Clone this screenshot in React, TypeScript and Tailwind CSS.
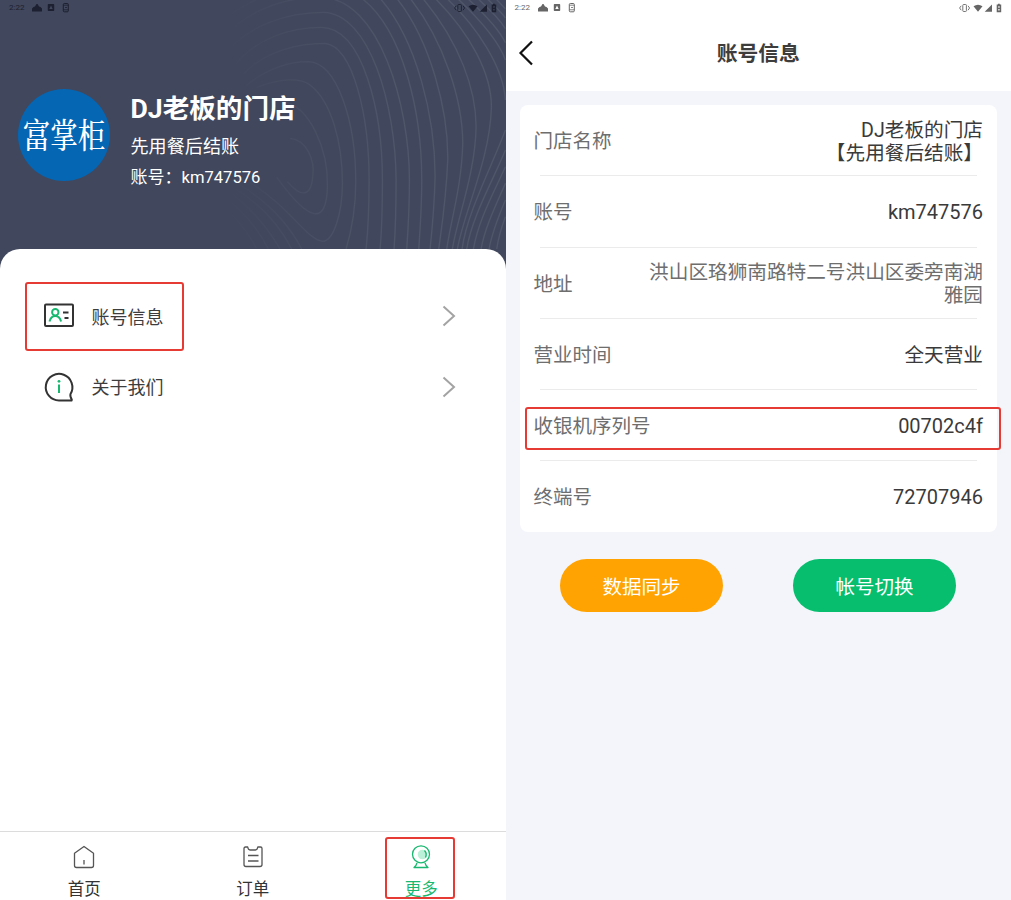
import { ReactNode } from 'react';

const FONT = "font-['Roboto','Noto_Sans_CJK_SC',sans-serif]";

// Contour lines of the profile header, in a 1516x747 space
const CONTOURS = [
  'M870 415C920 420 945 480 938 530C932 595 900 590 862 545',
  'M850 305C930 320 985 450 982 560C979 675 930 670 830 532',
  'M770 262C840 235 900 232 930 255C995 305 1027 430 1027 550C1027 640 1000 724 968 724C920 720 870 620 750 548',
  'M740 256C800 205 870 185 925 185C1010 188 1067 360 1067 545C1067 620 1055 690 1038 747',
  'M730 222C800 150 900 130 975 130C1060 140 1107 350 1107 540C1107 620 1104 690 1098 747',
  'M700 200C770 110 880 82 965 82C1090 84 1147 340 1147 540C1147 620 1145 690 1140 747',
  'M660 180C740 70 870 37 970 37C1110 40 1187 320 1188 540C1188 620 1186 690 1182 747',
  'M630 160C700 55 820 -8 960 -8C1140 -8 1228 320 1228 540C1228 620 1224 690 1220 747',
  'M600 140C660 50 750 0 820 -20M1085 -5C1210 90 1265 340 1265 540C1265 620 1260 690 1256 747',
  'M570 120C620 50 680 10 740 -20M1140 -5C1250 120 1305 350 1305 530C1303 620 1296 690 1290 747',
  'M1190 -5C1290 120 1345 330 1343 480C1338 600 1325 680 1316 747',
  'M1230 -5C1330 120 1388 300 1388 430C1385 560 1350 670 1340 747',
  'M1268 -5C1380 130 1428 270 1428 380C1426 520 1370 660 1357 747',
  'M1305 -5C1410 100 1474 220 1474 320C1470 480 1390 640 1372 747',
  'M1340 -5C1430 80 1510 200 1516 300M1516 390C1475 500 1400 640 1386 747',
  'M1372 -5C1430 50 1495 120 1516 180M1516 450C1480 540 1415 650 1400 747',
  'M1402 -5C1440 30 1495 85 1516 128M1516 500C1480 580 1435 660 1420 747',
  'M1432 -5C1460 20 1500 60 1516 86M1516 550C1490 610 1455 680 1443 747',
  'M1460 -5C1480 15 1505 38 1516 54M1516 600C1495 650 1475 700 1467 747',
  'M1486 -5L1516 26M1516 650C1505 680 1494 716 1490 747',
  'M720 555C810 610 870 680 905 747',
  'M695 560C780 610 840 680 875 747',
  'M670 565C750 615 800 680 840 747',
  'M650 575C720 620 770 680 805 747',
  'M630 590C690 630 740 690 770 747',
];

function StatusBar({ className }: { className: string }) {
  return (
    <div className={`flex h-[15px] items-center pl-[9px] pr-[9px] text-[8px] leading-none ${className}`}>
      <span className="w-[23px]">2:22</span>
      <svg width="40" height="11" viewBox="0 0 40 11" fill="currentColor">
        <path d="M0 6.500 1.500 5 3 4.500 4.500 2h1L7 4.500 8.500 5 10 6.500v3H0z" />
        <path fillRule="evenodd" d="M16.500 2h5a.7.7 0 0 1 .7.7v5.600a.7.7 0 0 1-.7.7h-5a.7.7 0 0 1-.7-.7V2.700a.7.7 0 0 1 .7-.7zM19 3.500 17.300 7h3.400z" />
        <rect x="31.300" y="1.500" width="5" height="8.300" rx="1" fill="none" stroke="currentColor" />
        <path d="M31.300 3.200h5M31.300 7.800h5M33 5.500h2" fill="none" stroke="currentColor" strokeWidth=".8" />
      </svg>
      <svg className="ml-auto" width="43" height="10" viewBox="0 0 43 10" fill="currentColor">
        <rect x="3.800" y="1.500" width="3.600" height="7" rx=".8" fill="none" stroke="currentColor" strokeWidth=".9" />
        <path d="M2.200 2.800.600 5l1.600 2.200M9 2.800 10.600 5 9 7.200" fill="none" stroke="currentColor" strokeWidth=".9" />
        <path d="M14.500 3.200Q19 .2 23.500 3.200L19 8.800zM33 1.500v7.300h-7.300z" />
        <path fillRule="evenodd" d="M39 .8h1.800v.8h1.400v7.600h-4.500V1.600H39zM39.300 3.300h1.300v1.500h-1.300zM39.300 6h1.300v1.500h-1.300z" />
      </svg>
    </div>
  );
}

function MenuItem({ icon, label }: { icon: ReactNode; label: string }) {
  return (
    <div className="flex h-[70.500px] items-center pl-[43px] pr-[48.500px]">
      <span className="w-[48.500px]">{icon}</span>
      <span className="pt-[2px] text-[18px] text-[#3d3d3d]">{label}</span>
      <svg className="ml-auto" width="16" height="22" viewBox="0 0 16 22" fill="none" stroke="#a3a3a3" strokeWidth="2">
        <path d="M2.500 1.500 13 11 2.500 20.500" />
      </svg>
    </div>
  );
}

function Tab({ icon, label, active }: { icon: ReactNode; label: string; active?: boolean }) {
  return (
    <div className={`flex flex-1 flex-col items-center pt-[12px] ${active ? 'text-[#19b870]' : 'text-[#333]'}`}>
      <div className="h-[26px] w-[26px] shrink-0">{icon}</div>
      <span className="mt-[8px] text-[16.500px] leading-[24px]">{label}</span>
    </div>
  );
}

function ProfileScreen() {
  return (
    <section className="relative flex w-[505.500px] shrink-0 flex-col bg-white">
      <div className="relative h-[269px] shrink-0 bg-[#41475c]">
        <svg className="absolute inset-0" width="505.500" height="269" viewBox="0 0 1516 807" fill="none">
          <defs>
            <linearGradient id="fade" gradientUnits="userSpaceOnUse" x1="680" y1="0" x2="1200" y2="0">
              <stop offset="0" stopColor="#7b8496" stopOpacity="0" />
              <stop offset="1" stopColor="#7b8496" stopOpacity=".25" />
            </linearGradient>
          </defs>
          {CONTOURS.map(d => (
            <path key={d} d={d} stroke="url(#fade)" strokeWidth="4" />
          ))}
        </svg>
        <div className="relative">
          <StatusBar className="text-[#1c2030]" />
          <div className="flex pl-[18px] pt-[75px]">
            <div className="-mt-px flex size-[92px] items-center justify-center rounded-full bg-[#0566b4]">
              <span className="-mt-[3px] scale-y-125 whitespace-nowrap font-['Noto_Serif_CJK_SC','Noto_Sans_CJK_SC',serif] text-[27.500px] font-medium leading-none text-white">富掌柜</span>
            </div>
            <div className="ml-[20.500px] text-white">
              <h1 className="text-[26.600px] font-bold leading-[38px]">DJ老板的门店</h1>
              <p className="mt-[6px] text-[18.100px] leading-[26px]">先用餐后结账</p>
              <p className="mt-[4px] text-[17px] leading-[26px]">
                账号：<span className="text-[16.600px]">km747576</span>
              </p>
            </div>
          </div>
        </div>
      </div>

      <div className="relative -mt-5 flex-1 rounded-t-[20px] bg-white pt-[32px]">
        <MenuItem
          label="账号信息"
          icon={
            <svg width="32" height="26" viewBox="0 0 32 26" fill="none" strokeWidth="2">
              <rect x="2" y="1.500" width="28" height="21.500" rx="1" stroke="#333" />
              <circle cx="12.300" cy="9.300" r="3.200" stroke="#19b870" />
              <path d="M6.500 18.500c1-3.800 3-5.500 5.800-5.500s4.800 1.700 5.800 5.500" stroke="#19b870" />
              <path d="M20 9.500h5.500M21.500 15H25.500" stroke="#333" />
            </svg>
          }
        />
        <MenuItem
          label="关于我们"
          icon={
            <svg width="32" height="32" viewBox="0 0 32 32" fill="none" strokeWidth="2" strokeLinejoin="round">
              <path d="M16 29.500a13.300 13.300 0 1 1 11.500-6.500c-.6 1.500-.2 2.800 1.300 5.800l-.3.700z" stroke="#333" />
              <path d="M16 13.500V22" stroke="#19b870" />
              <circle cx="16" cy="10.300" r="1.400" fill="#19b870" />
            </svg>
          }
        />
      </div>

      <nav className="flex h-[69px] shrink-0 border-t border-[#dcdcdc]">
        <Tab
          label="首页"
          icon={
            <svg width="26" height="26" viewBox="0 0 26 26" fill="none" stroke="#555" strokeWidth="1.300" strokeLinejoin="round">
              <path d="M3.500 9.300 13 2.500l9.500 6.800v12.200q0 2-2 2h-15q-2 0-2-2zM13 16v4.500" />
            </svg>
          }
        />
        <Tab
          label="订单"
          icon={
            <svg width="26" height="26" viewBox="0 0 26 26" fill="none" stroke="#555" strokeWidth="1.300" strokeLinejoin="round">
              <path d="M5.500 3h2.200q.5 3 2.300 3h5.500q1.800 0 2.300-3H20.500q1.500 0 1.500 1.500v16q0 2-2 2H6q-2 0-2-2v-16Q4 3 5.500 3zM8 11.500h10.500M8 17h10.500" />
            </svg>
          }
        />
        <Tab
          active
          label="更多"
          icon={
            <svg width="26" height="26" viewBox="0 0 26 26" fill="none" stroke="currentColor" strokeWidth="1.300" strokeLinejoin="round">
              <circle cx="14.500" cy="10.500" r="4.800" fill="#bdf0d8" stroke="none" />
              <circle cx="13" cy="10.300" r="8.500" />
              <path d="M16.500 6.500q2.800 3 1 7M9 18.800q-.5 2.500-3 4.700h14q-2.500-2.200-3-4.700" />
            </svg>
          }
        />
      </nav>

      {/* Highlights */}
      <div className="absolute left-[24.500px] top-[282px] h-[69px] w-[159px] rounded-[3px] border-2 border-[#e63b35]" />
      <div className="absolute left-[385px] top-[837px] h-[62px] w-[70px] rounded-[3px] border-2 border-[#e63b35]" />
    </section>
  );
}

const ROWS = [
  { label: '门店名称', value: 'DJ老板的门店\n【先用餐后结账】' },
  { label: '账号', value: 'km747576', latin: true },
  { label: '地址', value: '洪山区珞狮南路特二号洪山区委旁南湖雅园', muted: true },
  { label: '营业时间', value: '全天营业' },
  { label: '收银机序列号', value: '00702c4f', latin: true },
  { label: '终端号', value: '72707946', latin: true },
];

function AccountScreen() {
  return (
    <section className="relative flex-1 bg-[#f3f5fa]">
      <header className="h-[91px] bg-white">
        <StatusBar className="text-[#666]" />
        <div className="relative flex h-[75px] items-center justify-center">
          <svg className="absolute left-[12px] top-[25px]" width="16" height="26" viewBox="0 0 16 26" fill="none" stroke="#111" strokeWidth="2.200">
            <path d="M14 1.500 2.500 13 14 24.500" />
          </svg>
          <h2 className="pt-[4px] text-[20.800px] font-bold text-[#3d3d3d]">账号信息</h2>
        </div>
      </header>

      <div className="ml-[14px] mr-[14px] mt-[14px] rounded-lg bg-white text-[19.500px]">
        {ROWS.map((row, i) => (
          <div key={row.label}>
            <div className="flex h-[70.250px] items-center justify-between px-[14px] pt-[3px]">
              <span className="shrink-0 text-[#6e6e6e]">{row.label}</span>
              <span
                className={`w-[340px] whitespace-pre-line text-right leading-[23px] ${row.latin ? 'text-[20px]' : 'text-[19.650px]'} ${row.muted ? 'text-[#6e6e6e]' : 'text-[#3a3a3a]'}`}
              >
                {row.value}
              </span>
            </div>
            {i < ROWS.length - 1 && <div className="mx-[20px] h-px bg-[#ebebeb]" />}
          </div>
        ))}
      </div>

      <div className="mt-[27.500px] flex justify-between pl-[54.500px] pr-[55px] text-[19.500px] text-white">
        <button className="h-[53px] w-[163px] rounded-full bg-[#ffa303] pt-[5px]">数据同步</button>
        <button className="h-[53px] w-[163px] rounded-full bg-[#07be6f] pt-[5px]">帐号切换</button>
      </div>

      <div className="absolute left-[19px] top-[407px] h-[43px] w-[476.500px] rounded-[3px] border-2 border-[#e63b35]" />
    </section>
  );
}

export default function App() {
  return (
    <main className={`flex h-[900px] w-[1011px] overflow-hidden bg-white ${FONT}`}>
      <ProfileScreen />
      <AccountScreen />
    </main>
  );
}
